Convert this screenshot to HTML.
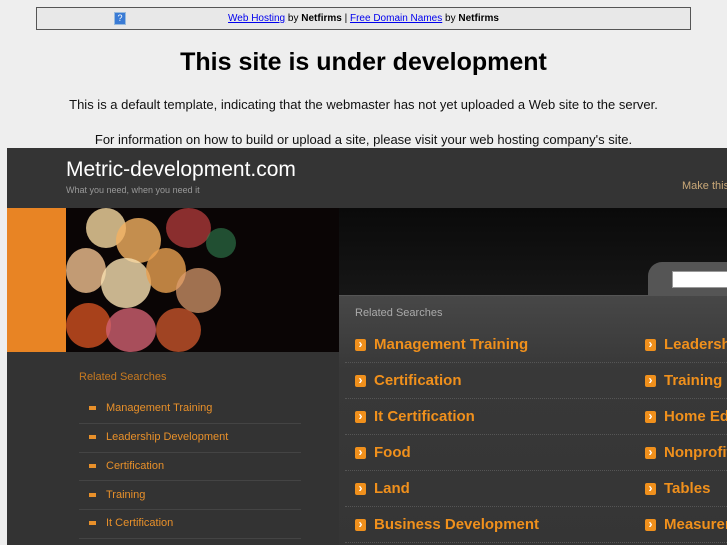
<!DOCTYPE html>
<html><head><meta charset="utf-8"><style>
*{margin:0;padding:0;box-sizing:border-box}
body{width:727px;height:545px;overflow:hidden;background:#eee;font-family:"Liberation Sans",sans-serif;position:relative}
div{white-space:nowrap}
.top{position:absolute;left:36px;top:7px;width:655px;height:23px;border:1px solid #555;background:#e8e8e8;font-size:10px;text-align:center;line-height:21px}
.top a{color:#00e;text-decoration:underline}
.q{position:absolute;left:77px;top:4px;width:12px;height:13px;background:#3a7bd5;border:1px solid #9bd;color:#fff;font-size:9px;line-height:11px}
h1{position:absolute;top:48px;width:727px;text-align:center;font-size:25px;font-weight:bold;color:#000}
.p{position:absolute;width:727px;text-align:center;font-size:13px;color:#111}
.dark{position:absolute;left:7px;top:148px;width:720px;height:397px;background:#333}
.hdr{position:absolute;left:7px;top:148px;width:720px;height:60px;background:#343434}
.orange{position:absolute;left:7px;top:208px;width:59px;height:144px;background:#e88424}
.img{position:absolute;left:66px;top:208px;width:273px;height:144px;background:#0a0505;overflow:hidden}
.blk{position:absolute;left:339px;top:208px;width:388px;height:144px;background:linear-gradient(#0a0a0a,#1e1e1e)}
.panel{position:absolute;left:339px;top:295px;width:388px;height:250px;background:linear-gradient(#474747,#383838 30%,#353535);border-top:1px solid #555}
.tab{position:absolute;left:648px;top:262px;width:90px;height:34px;background:#555;border-radius:14px 0 0 0}
.search{position:absolute;left:672px;top:271px;width:60px;height:17px;background:#fff;border:1px solid #999}
.ri{position:absolute;font-size:15px;font-weight:bold;color:#f0901c}
.ri:before{content:"›";display:inline-block;width:11px;height:12px;background:#f0901c;color:#fff;font-size:12px;line-height:11px;text-align:center;border-radius:2px;margin-right:8px;vertical-align:1px}
.sep{position:absolute;left:345px;width:382px;border-top:1px dotted #555}
.li{position:absolute;left:106px;font-size:11px;color:#e8902a}
.li:before{content:"";position:absolute;left:-17px;top:4px;width:7px;height:4px;background:#e8902a}
.lsep{position:absolute;left:79px;width:222px;border-top:1px solid #444}
.c{position:absolute;border-radius:50%}
</style></head><body>
<div class="top"><span class="q">?</span><a>Web Hosting</a> by <b>Netfirms</b> | <a>Free Domain Names</a> by <b>Netfirms</b></div>
<h1>This site is under development</h1>
<div class="p" style="top:97px">This is a default template, indicating that the webmaster has not yet uploaded a Web site to the server.</div>
<div class="p" style="top:132px">For information on how to build or upload a site, please visit your web hosting company's site.</div>
<div class="dark"></div>
<div class="hdr"></div>
<div style="position:absolute;left:66px;top:158px;font-size:21px;color:#fff">Metric-development.com</div>
<div style="position:absolute;left:66px;top:185px;font-size:9px;color:#999">What you need, when you need it</div>
<div style="position:absolute;left:682px;top:180px;font-size:11px;color:#c9a878">Make this</div>
<div class="orange"></div>
<div class="img">
<div class="c" style="left:20px;top:0;width:40px;height:40px;background:#f5d8a0;opacity:.8"></div>
<div class="c" style="left:50px;top:10px;width:45px;height:45px;background:#f2b060;opacity:.8"></div>
<div class="c" style="left:0;top:40px;width:40px;height:45px;background:#f0c090;opacity:.8"></div>
<div class="c" style="left:35px;top:50px;width:50px;height:50px;background:#f8e0b0;opacity:.8"></div>
<div class="c" style="left:80px;top:40px;width:40px;height:45px;background:#e8a050;opacity:.8"></div>
<div class="c" style="left:100px;top:0;width:45px;height:40px;background:#c04040;opacity:.7"></div>
<div class="c" style="left:110px;top:60px;width:45px;height:45px;background:#e0a070;opacity:.7"></div>
<div class="c" style="left:0;top:95px;width:45px;height:45px;background:#d05020;opacity:.8"></div>
<div class="c" style="left:40px;top:100px;width:50px;height:44px;background:#d06070;opacity:.8"></div>
<div class="c" style="left:90px;top:100px;width:45px;height:44px;background:#e06030;opacity:.7"></div>
<div class="c" style="left:140px;top:20px;width:30px;height:30px;background:#308050;opacity:.6"></div>
</div>
<div class="blk"></div>
<div class="tab"></div><div class="search"></div>
<div class="panel"></div>
<div style="position:absolute;left:355px;top:307px;font-size:11px;color:#aaa">Related Searches</div>
<div class="ri" style="left:355px;top:336px">Management Training</div>
<div class="ri" style="left:645px;top:336px">Leadership</div>
<div class="ri" style="left:355px;top:372px">Certification</div>
<div class="ri" style="left:645px;top:372px">Training</div>
<div class="ri" style="left:355px;top:408px">It Certification</div>
<div class="ri" style="left:645px;top:408px">Home Ed</div>
<div class="ri" style="left:355px;top:444px">Food</div>
<div class="ri" style="left:645px;top:444px">Nonprofit</div>
<div class="ri" style="left:355px;top:480px">Land</div>
<div class="ri" style="left:645px;top:480px">Tables</div>
<div class="ri" style="left:355px;top:516px">Business Development</div>
<div class="ri" style="left:645px;top:516px">Measurement</div>
<div class="sep" style="top:362px"></div><div class="sep" style="top:398px"></div><div class="sep" style="top:434px"></div><div class="sep" style="top:470px"></div><div class="sep" style="top:506px"></div><div class="sep" style="top:542px"></div>
<div style="position:absolute;left:79px;top:371px;font-size:11px;color:#c87a20">Related Searches</div>
<div class="li" style="top:402px">Management Training</div>
<div class="li" style="top:431px">Leadership Development</div>
<div class="li" style="top:460px">Certification</div>
<div class="li" style="top:489px">Training</div>
<div class="li" style="top:517px">It Certification</div>
<div class="lsep" style="top:423px"></div><div class="lsep" style="top:452px"></div><div class="lsep" style="top:480px"></div><div class="lsep" style="top:509px"></div><div class="lsep" style="top:538px"></div>
</body></html>
